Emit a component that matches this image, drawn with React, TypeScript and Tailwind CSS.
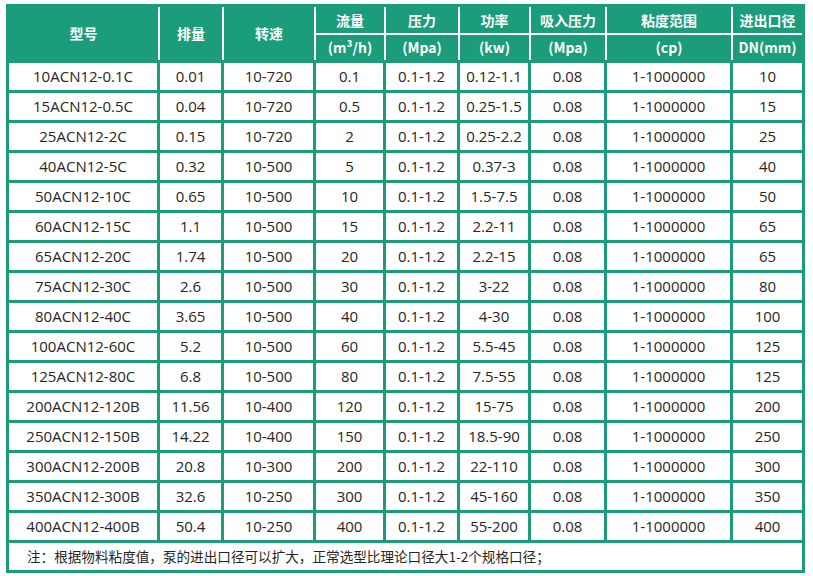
const rows = [
  ["10ACN12-0.1C", "0.01", "10-720", "0.1", "0.1-1.2", "0.12-1.1", "0.08", "1-1000000", "10"],
  ["15ACN12-0.5C", "0.04", "10-720", "0.5", "0.1-1.2", "0.25-1.5", "0.08", "1-1000000", "15"],
  ["25ACN12-2C", "0.15", "10-720", "2", "0.1-1.2", "0.25-2.2", "0.08", "1-1000000", "25"],
  ["40ACN12-5C", "0.32", "10-500", "5", "0.1-1.2", "0.37-3", "0.08", "1-1000000", "40"],
  ["50ACN12-10C", "0.65", "10-500", "10", "0.1-1.2", "1.5-7.5", "0.08", "1-1000000", "50"],
  ["60ACN12-15C", "1.1", "10-500", "15", "0.1-1.2", "2.2-11", "0.08", "1-1000000", "65"],
  ["65ACN12-20C", "1.74", "10-500", "20", "0.1-1.2", "2.2-15", "0.08", "1-1000000", "65"],
  ["75ACN12-30C", "2.6", "10-500", "30", "0.1-1.2", "3-22", "0.08", "1-1000000", "80"],
  ["80ACN12-40C", "3.65", "10-500", "40", "0.1-1.2", "4-30", "0.08", "1-1000000", "100"],
  ["100ACN12-60C", "5.2", "10-500", "60", "0.1-1.2", "5.5-45", "0.08", "1-1000000", "125"],
  ["125ACN12-80C", "6.8", "10-500", "80", "0.1-1.2", "7.5-55", "0.08", "1-1000000", "125"],
  ["200ACN12-120B", "11.56", "10-400", "120", "0.1-1.2", "15-75", "0.08", "1-1000000", "200"],
  ["250ACN12-150B", "14.22", "10-400", "150", "0.1-1.2", "18.5-90", "0.08", "1-1000000", "250"],
  ["300ACN12-200B", "20.8", "10-300", "200", "0.1-1.2", "22-110", "0.08", "1-1000000", "300"],
  ["350ACN12-300B", "32.6", "10-250", "300", "0.1-1.2", "45-160", "0.08", "1-1000000", "350"],
  ["400ACN12-400B", "50.4", "10-250", "400", "0.1-1.2", "55-200", "0.08", "1-1000000", "400"],
];

// columns that carry a unit line under the title
const unitCols = [
  { title: "流量", unit: "(m³/h)" },
  { title: "压力", unit: "(Mpa)" },
  { title: "功率", unit: "(kw)" },
  { title: "吸入压力", unit: "(Mpa)" },
  { title: "粘度范围", unit: "(cp)" },
  { title: "进出口径", unit: "DN(mm)" },
];

const FONT = "font-['Open_Sans','Noto_Sans_CJK_SC',sans-serif]";

const HeadCell = ({ children, span }: { children: React.ReactNode; span?: boolean }) => (
  <div
    className={`flex items-center justify-center bg-[#1b9c7a] font-['Noto_Sans_CJK_SC',sans-serif] text-[14px] font-bold text-white ${
      span ? "row-span-2" : ""
    }`}
  >
    {children}
  </div>
);

export default function App() {
  return (
    <div className={`bg-white w-[813px] h-[576px] pt-[4px] pl-[6px] ${FONT}`}>
      <div className="flex w-[799px] flex-col gap-[3px] bg-[#1b9c7a] p-[3px]">
        <div className="grid grid-flow-col grid-cols-[149px_62px_90px_68px_72px_69px_74px_124px_69px] grid-rows-[26px_25px] gap-[2px] bg-white">
          <HeadCell span>型号</HeadCell>
          <HeadCell span>排量</HeadCell>
          <HeadCell span>转速</HeadCell>
          {unitCols.map((c) => [
            <HeadCell key={c.title}>{c.title}</HeadCell>,
            <HeadCell key={c.title + "u"}>{c.unit}</HeadCell>,
          ])}
        </div>
        <div className="grid grid-cols-[148px_61px_89px_67px_71px_68px_73px_123px_69px] auto-rows-[27px] gap-[3px]">
          {rows.map((r) =>
            r.map((v, i) => (
              <div
                key={r[0] + i}
                className="flex items-center justify-center bg-white text-[15px] text-[#262626]"
              >
                {v}
              </div>
            ))
          )}
          <div className="col-span-9 flex items-center bg-white pl-[18px] font-['Noto_Sans_CJK_SC',sans-serif] text-[13.6px] text-[#262626]">
            注：根据物料粘度值，泵的进出口径可以扩大，正常选型比理论口径大1-2个规格口径；
          </div>
        </div>
      </div>
    </div>
  );
}
